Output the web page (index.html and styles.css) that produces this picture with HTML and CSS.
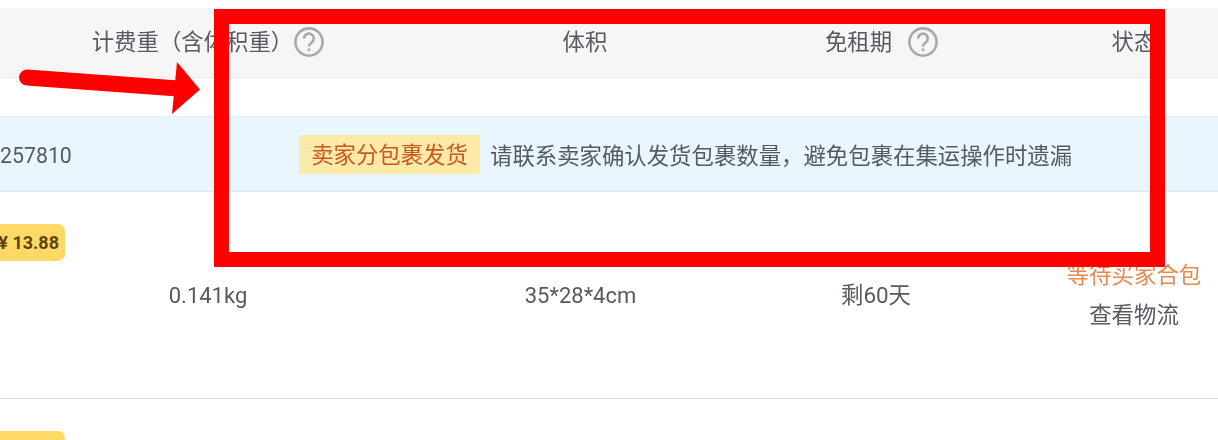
FILE: index.html
```html
<!DOCTYPE html>
<html lang="zh-CN">
<head>
<meta charset="utf-8">
<title>集运包裹</title>
<link rel="stylesheet" href="styles.css">
</head>
<body>
<main class="page">
  <div class="table">
    <div class="grid head">
      <div class="cell">计费重（含体积重）<svg class="help" viewBox="0 0 30 30"><circle cx="15" cy="15" r="13.6"/><path d="M10.2 11.500a4.800 4.800 0 1 1 7.700 3.700c-1.800 1.400-2.900 2.300-2.900 4.300"/><path d="M15 21.500v2.600"/></svg></div>
      <div class="cell">体积</div>
      <div class="cell cell-offset">免租期<svg class="help help-wide" viewBox="0 0 30 30"><circle cx="15" cy="15" r="13.6"/><path d="M10.2 11.500a4.800 4.800 0 1 1 7.700 3.700c-1.800 1.400-2.900 2.300-2.900 4.300"/><path d="M15 21.500v2.600"/></svg></div>
      <div class="cell">状态</div>
    </div>
    <div class="spacer"></div>
    <div class="notice">
      <span class="order-no">257810</span>
      <span class="tag">卖家分包裹发货</span>
      <span class="notice-text">请联系卖家确认发货包裹数量，避免包裹在集运操作时遗漏</span>
    </div>
    <div class="grid item">
      <span class="price">¥ 13.88</span>
      <div class="cell latin">0.141kg</div>
      <div class="cell latin latin-shift">35*28*4cm</div>
      <div class="cell">剩60天</div>
      <div class="cell status">
        <span class="status-wait">等待买家合包</span>
        <span>查看物流</span>
      </div>
    </div>
    <div class="grid item">
      <span class="price">¥ 13.88</span>
    </div>
  </div>
  <div class="highlight-box"></div>
  <svg class="arrow" viewBox="0 0 220 60" aria-hidden="true">
    <path class="arrow-shaft" d="M27 17.500 L178 28.500"/>
    <path class="arrow-head" d="M177 2 L200 29.500 L172 54 Z"/>
  </svg>
</main>
</body>
</html>
```
FILE: styles.css
```css
* { box-sizing: border-box; }
html, body { margin: 0; height: 440px; overflow: hidden; background: #fff; }
.page {
  position: relative;
  height: 440px;
  padding-top: 8px;
  overflow: hidden;
  font-family: Roboto, "Noto Sans CJK SC", sans-serif;
  font-size: 22.4px;
  line-height: 30px;
  color: #555a60;
  filter: blur(0.4px);
}
.grid {
  display: grid;
  grid-template-columns: 416px 338px 244px 272px;
  width: 1270px;
}
.cell {
  display: flex;
  align-items: center;
  justify-content: center;
  white-space: nowrap;
}
.cell-offset { padding-left: 11px; }
.latin { font-size: 22px; padding-top: 2px; }
.latin-shift { padding-right: 9px; }
.head {
  height: 70px;
  background: #f6f6f6;
  border-bottom: 1px solid #ececec;
}
.head .cell { padding-bottom: 1px; }
.help {
  width: 30px;
  height: 30px;
  margin-left: 1px;
  flex: none;
  fill: none;
  stroke: #a9a9a9;
  stroke-width: 2.6;
}
.help-wide { margin-left: 16px; }
.spacer { height: 38px; }
.notice {
  display: flex;
  align-items: center;
  height: 76px;
  background: #e9f6fd;
  border-top: 1px solid #e3eff6;
  border-bottom: 1px solid #d8eaf3;
}
.order-no {
  flex: none;
  width: 71px;
  padding-top: 3px;
  text-align: right;
  font-size: 21.300px;
  margin-right: 228px;
}
.tag {
  flex: none;
  width: 181px;
  height: 39px;
  line-height: 41px;
  text-align: center;
  background: #fdeaa8;
  color: #c9581f;
  margin-right: 10px;
}
.notice-text { padding-top: 3px; }
.item {
  position: relative;
  height: 207px;
  border-bottom: 1px solid #cfe2ea;
}
.price {
  position: absolute;
  left: -20px;
  top: 32px;
  width: 85px;
  height: 37px;
  line-height: 37px;
  padding-right: 6px;
  text-align: right;
  border-radius: 7px;
  background: #ffd966;
  color: #5d4208;
  font-size: 18px;
  font-weight: 700;
}
.status { flex-direction: column; line-height: 40px; }
.status-wait { color: #e58a4e; }
.highlight-box {
  position: absolute;
  left: 214px;
  top: 9px;
  width: 951px;
  height: 258px;
  border: 15px solid #f00;
}
.arrow {
  position: absolute;
  left: 0;
  top: 60px;
  width: 220px;
  height: 60px;
}
.arrow-shaft { fill: none; stroke: #f00; stroke-width: 16; stroke-linecap: round; }
.arrow-head { fill: #f00; }
```
